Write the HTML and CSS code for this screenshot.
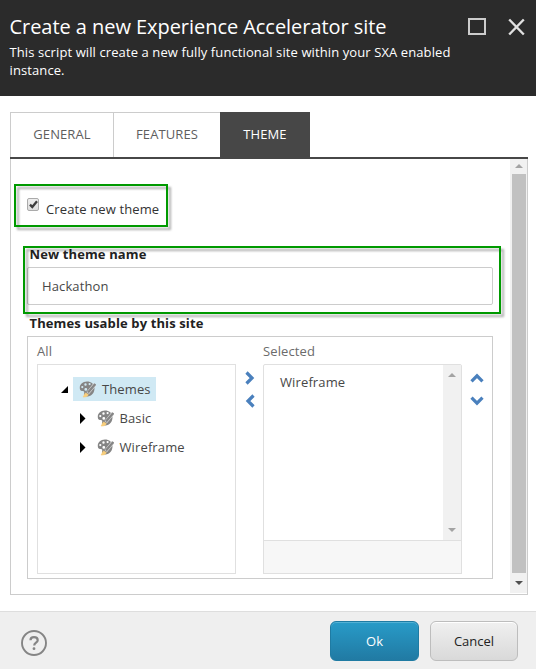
FILE: index.html
```html
<!DOCTYPE html>
<html lang="en">
<head>
<meta charset="utf-8">
<title>Create a new Experience Accelerator site</title>
<link rel="stylesheet" href="styles.css">
</head>
<body>
<svg width="0" height="0" class="defs">
  <symbol id="palette" viewBox="0 0 17 17">
    <path fill="#858585" fill-rule="evenodd" d="M8 .5C3.500.5.6 3.600.8 7c.1 2.800 1.600 3 3 3 1.500 0 1.700 1 1.200 2.500C4.500 14.500 6 15.800 8.500 15.500c4-.5 7-3.500 7-8C15.500 3 12 .5 8 .5zM6.500 2.300a1.200 1.200 0 1 1 0 2.400 1.200 1.200 0 0 1 0-2.400zM10.600 2a1.100 1.100 0 1 1 0 2.200 1.100 1.100 0 0 1 0-2.200zM3.300 5a1.100 1.100 0 1 1 0 2.200 1.100 1.100 0 0 1 0-2.200zM6.800 7a1.400 1.400 0 1 1 0 2.800 1.400 1.400 0 0 1 0-2.800z"/>
    <path d="M16 3.200 8.800 12" stroke="#ddd" stroke-width="3.400"/>
    <path d="M16.300 3 9 11.500" stroke="#858585" stroke-width="2.300"/>
    <path d="M6.800 12 9.300 13.500c-.7 2-2.300 2.700-5.300 2.500 1.400-1 1-3.700 2.800-4z" fill="#f8ce7c" stroke="#f8ce7c" stroke-width=".6"/>
  </symbol>
</svg>
<header class="header">
  <div class="heading">
    <h1>Create a new Experience Accelerator site</h1>
    <p>This script will create a new fully functional site within your SXA enabled instance.</p>
  </div>
  <div class="window-buttons">
    <span class="maximize"></span>
    <svg class="close" width="18" height="18" viewBox="0 0 18 18"><path d="M1.200 1.500l14.600 15M15.800 1.500l-14.600 15" stroke="#e0e0e0" stroke-width="2.400"/></svg>
  </div>
</header>
<main class="main">
  <nav class="tabs">
    <span class="tab general">GENERAL</span>
    <span class="tab features">FEATURES</span>
    <span class="tab active">THEME</span>
  </nav>
  <section class="panel">
    <div class="content">
      <div class="check-row">
        <span class="checkbox"><svg width="11" height="11" viewBox="0 0 11 11"><path d="M2 5.600 4.300 8 9 2.300" fill="none" stroke="#3c3c3c" stroke-width="2.300"/></svg></span>
        <span class="check-label">Create new theme</span>
      </div>
      <div class="name-field">
        <span class="label">New theme name</span>
        <div class="input">Hackathon</div>
      </div>
      <span class="label second">Themes usable by this site</span>
      <div class="picker">
        <div class="column">
          <span class="caption">All</span>
          <div class="list tree">
            <div class="node root"><svg class="toggle" width="9" height="9"><path d="M7 1v7H0z"/></svg><span class="item selected"><svg class="icon"><use href="#palette"/></svg>Themes</span></div>
            <div class="node"><svg class="toggle" width="9" height="11"><path d="M1 0v11l5.500-5.500z"/></svg><span class="item"><svg class="icon"><use href="#palette"/></svg>Basic</span></div>
            <div class="node"><svg class="toggle" width="9" height="11"><path d="M1 0v11l5.500-5.500z"/></svg><span class="item"><svg class="icon"><use href="#palette"/></svg>Wireframe</span></div>
          </div>
        </div>
        <div class="arrows move">
          <svg width="10" height="14" viewBox="0 0 10 14"><path d="M1.500 1.500 7 7l-5.500 5.500"/></svg>
          <svg width="10" height="14" viewBox="0 0 10 14"><path d="M8.500 1.500 3 7l5.500 5.500"/></svg>
        </div>
        <div class="column">
          <span class="caption">Selected</span>
          <div class="list chosen">
            <span class="option">Wireframe</span>
            <div class="inner-scroll">
              <svg width="8" height="4"><path d="M4 0l4 4H0z"/></svg>
              <svg width="8" height="4"><path d="M0 0h8L4 4z"/></svg>
            </div>
          </div>
          <div class="details"></div>
        </div>
        <div class="arrows sort">
          <svg width="14" height="10" viewBox="0 0 14 10"><path d="M1.500 8.300 7 2.800l5.500 5.500"/></svg>
          <svg width="14" height="10" viewBox="0 0 14 10"><path d="M1.500 1.700 7 7.200l5.500-5.500"/></svg>
        </div>
      </div>
    </div>
    <div class="scrollbar">
      <svg width="8" height="4"><path fill="#a3a3a3" d="M4 0l4 4H0z"/></svg>
      <div class="thumb"></div>
      <svg width="8" height="4"><path fill="#505050" d="M0 0h8L4 4z"/></svg>
    </div>
  </section>
</main>
<footer class="footer">
  <svg class="help" width="26" height="26" viewBox="0 0 26 26" fill="none" stroke="#858585"><circle cx="13" cy="13" r="12" stroke-width="1.900"/><path d="M9.500 10.300C9.500 8 11 7.200 13 7.200s3.700 1 3.700 3c0 2.500-3.500 2.500-3.500 5.300" stroke-width="2.200"/><circle cx="13" cy="18.700" r="1.400" fill="#858585" stroke="none"/></svg>
  <span class="button ok">Ok</span>
  <span class="button cancel">Cancel</span>
</footer>
</body>
</html>
```
FILE: styles.css
```css
* { box-sizing: border-box; }
body {
  margin: 0;
  width: 536px;
  height: 669px;
  display: flex;
  flex-direction: column;
  overflow: hidden;
  background: #fff;
  font: 13px/18px "Open Sans", "Noto Sans", sans-serif;
  color: #474747;
}
svg { display: block; flex: none; }
.defs { display: none; }
.header {
  height: 96px;
  flex: none;
  display: flex;
  justify-content: space-between;
  padding: 13px 10px 0 9.5px;
  background: #2b2b2b;
  color: #fff;
}
.heading { width: 450px; }
h1 { margin: 0 0 2px; font-size: 20px; line-height: 28px; font-weight: 400; letter-spacing: -.05px; white-space: nowrap; }
p { margin: 0; letter-spacing: .1px; font-weight: 450; }
.window-buttons { display: flex; gap: 22px; padding-top: 5px; }
.maximize { width: 18px; height: 17px; border: 2px solid #ccc; }
.main { height: 515px; flex: none; padding: 16px 8px 0 10px; }
.tabs { display: flex; height: 47px; border-bottom: 2px solid #474747; }
.tab {
  display: flex;
  align-items: center;
  justify-content: center;
  padding-bottom: 2px;
  border: 1px solid #ccc;
  border-width: 1px 0 0 1px;
  color: #5e5e5e;
  letter-spacing: .1px;
}
.general { width: 103px; }
.features { width: 107px; }
.active { width: 90px; border: 0; background: #474747; color: #fff; }
.panel {
  display: flex;
  height: 436px;
  border: 1px solid #ccc;
  border-top: 0;
}
.content { width: 499px; padding: 25px 0 0 16px; letter-spacing: .12px; }
.check-row { position: relative; display: flex; width: 141px; height: 43px; }
.check-row::after, .name-field::after {
  content: "";
  position: absolute;
  border: 2px solid #009a00;
  filter: drop-shadow(3px 3px 1px rgba(0, 0, 0, .32));
}
.check-row::after { inset: 0 0 0 -13px; }
.checkbox {
  width: 12px;
  height: 13px;
  margin: 14px 7px 0 0;
  border: 1px solid #aaa;
  border-radius: 2px;
  background: linear-gradient(#eee, #ddd);
}
.check-label { padding-top: 16px; white-space: nowrap; color: #333; }
.name-field { position: relative; margin-top: 18px; width: 466px; }
.name-field::after { inset: 1px -8px -9px -4px; }
.label { display: block; height: 22px; padding-left: 2.500px; font-weight: 700; color: #222; }
.input {
  display: flex;
  align-items: center;
  width: 466px;
  height: 38px;
  padding-left: 14px;
  border: 1px solid #ccc;
  border-radius: 2px;
}
.second { margin-top: 9px; }
.picker { display: flex; width: 466px; height: 243px; border: 1px solid #ccc; padding: 5px 9px 4px; }
.column { width: 199px; display: flex; flex: none; flex-direction: column; }
.caption { height: 22px; color: #6b6b6b; }
.list { flex: 1; border: 1px solid #e0e0e0; }
.tree { padding-top: 12px; }
.node { display: flex; align-items: center; height: 24px; margin-bottom: 5px; padding-left: 41px; }
.root { padding-left: 23px; }
.toggle { width: 9px; margin-right: 3px; }
.item { display: flex; align-items: center; height: 24px; padding: 0 5px 0 6px; }
.node:not(.root) .item { padding-left: 5.500px; }
.selected { background: #d0e9f4; }
.icon { width: 17px; height: 17px; margin-right: 6px; }
.arrows { display: flex; flex-direction: column; fill: none; stroke: #4a80bd; stroke-width: 3.200; }
.move { width: 27px; flex: none; padding: 29px 0 0 9px; gap: 9px; }
.sort { padding: 31px 0 0 8px; gap: 13px; }
.chosen { flex: none; height: 177px; display: flex; justify-content: space-between; border-radius: 2px 2px 0 0; }
.option { padding: 8px 0 0 16px; }
.inner-scroll {
  display: flex;
  flex-direction: column;
  justify-content: space-between;
  align-items: center;
  width: 18px;
  padding: 8px 0;
  background: #f1f1f1;
  fill: #a3a3a3;
}
.details { flex: 1; margin-top: -1px; border: 1px solid #e0e0e0; background: #f7f7f7; }
.scrollbar {
  width: 17px;
  height: 434px;
  display: flex;
  flex-direction: column;
  align-items: center;
  padding-top: 5px;
  background: #f1f1f1;
}
.thumb { width: 14px; height: 399px; margin: 6px 0 8px; background: #c1c1c1; flex: none; }
.footer {
  flex: 1;
  display: flex;
  align-items: flex-start;
  padding: 9px 18px 0 21px;
  border-top: 1px solid #dedede;
  background: #efefef;
}
.help { margin: 9px auto 0 0; }
.button {
  display: flex;
  align-items: center;
  justify-content: center;
  width: 89px;
  height: 40px;
  border: 1px solid #bdbdbd;
  border-radius: 6px;
}
.ok {
  margin-right: 11px;
  border-color: #1f7ba3;
  background: linear-gradient(#289bc8, #217aa3);
  box-shadow: inset 0 1px #53b1d5;
  color: #fff;
  font-weight: 500;
}
.cancel { width: 88px; background: linear-gradient(#f0f0f0, #d9d9d9); box-shadow: inset 0 1px #fff; color: #222; }
```
